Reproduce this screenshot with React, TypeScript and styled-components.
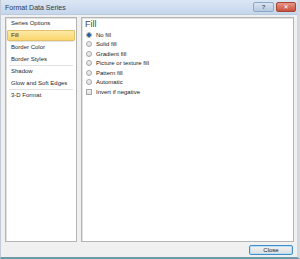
import styled, { createGlobalStyle } from "styled-components";

const Global = createGlobalStyle`
  html, body { margin: 0; padding: 0; }
  body {
    width: 300px;
    height: 259px;
    overflow: hidden;
    font-family: "Liberation Sans", "DejaVu Sans", sans-serif;
  }
`;

// Dialog window
const Window = styled.div`
  width: 300px;
  height: 259px;
  box-sizing: border-box;
  background: #f0f0f0;
  border-left: 1px solid #c3ccd6;
  border-right: 3px solid #d4d8dc;
  border-bottom: 2px solid #6b9aab;
  display: flex;
  flex-direction: column;
`;

const TitleBar = styled.div`
  height: 14px;
  flex: none;
  display: flex;
  align-items: center;
  padding-left: 4px;
  padding-right: 1px;
  background: linear-gradient(#dbe6f4, #c5d6ec);
  border-bottom: 1px solid #b9cbe0;
`;

const Title = styled.span`
  flex: 1;
  font-size: 7px;
  color: #2b3b50;
`;

const CaptionButton = styled.div<{ $red?: boolean }>`
  width: ${(p) => (p.$red ? 18 : 19)}px;
  height: 8px;
  margin-left: 2px;
  border: 1px solid ${(p) => (p.$red ? "#a8452f" : "#8ea7c4")};
  border-radius: 2px;
  background: ${(p) =>
    p.$red
      ? "linear-gradient(#e6968a, #c9503c)"
      : "linear-gradient(#d9e4f1, #b6c9e0)"};
  color: ${(p) => (p.$red ? "#fff" : "#4a5a70")};
  font-size: 6px;
  font-weight: bold;
  line-height: 8px;
  text-align: center;
`;

const Body = styled.div`
  flex: 1;
  display: flex;
  gap: 4px;
  padding: 2px 3px 0 4px;
  min-height: 0;
`;

const Panel = styled.div<{ $w?: number }>`
  ${(p) => (p.$w ? `width: ${p.$w}px; flex: none;` : "flex: 1;")}
  height: 225px;
  box-sizing: border-box;
  background: #fff;
  border: 1px solid #b4b4b4;
  box-shadow: inset 1px 1px 0 #e2e2e2;
`;

const List = styled.div`
  padding: 0 1px;
  display: flex;
  flex-direction: column;
`;

const ListItem = styled.div<{ $selected?: boolean }>`
  height: 11.5px;
  line-height: 9.5px;
  padding-left: 3px;
  font-size: 6px;
  color: #2a2a2a;
  box-sizing: border-box;
  border: 1px solid ${(p) => (p.$selected ? "#e3c06a" : "transparent")};
  border-radius: 1px;
  background: ${(p) =>
    p.$selected ? "linear-gradient(#fdeaa6, #fbd66c)" : "transparent"};
`;

const Divider = styled.div`
  height: 1px;
  background: #e2e2e2;
  margin: 0 2px;
`;

const Section = styled.div`
  padding: 1px 0 0 3px;
`;

const Heading = styled.div`
  font-size: 9px;
  color: #3b4a5e;
  height: 11px;
  line-height: 11px;
`;

const Option = styled.div`
  display: flex;
  align-items: center;
  gap: 4px;
  height: 9.5px;
  padding-left: 1px;
  font-size: 6px;
  color: #222;
`;

const Radio = styled.span<{ $on?: boolean }>`
  width: 6px;
  height: 6px;
  box-sizing: border-box;
  border-radius: 50%;
  border: 1px solid #a7a7a7;
  background: ${(p) =>
    p.$on
      ? "radial-gradient(circle, #1f5fa8 0 1.6px, #dfe6ee 2px)"
      : "linear-gradient(#f2f2f2, #dcdcdc)"};
`;

const Check = styled.span`
  width: 6px;
  height: 6px;
  box-sizing: border-box;
  border: 1px solid #a7a7a7;
  background: linear-gradient(#f4f4f4, #dedede);
`;

const Footer = styled.div`
  height: 15px;
  flex: none;
  display: flex;
  justify-content: flex-end;
  align-items: center;
  padding-right: 4px;
`;

const Button = styled.div`
  width: 44px;
  height: 10px;
  box-sizing: border-box;
  border: 1px solid #3c8fc8;
  border-radius: 2px;
  box-shadow: inset 0 0 0 1px #b8e0f8;
  background: linear-gradient(#f4f4f4, #dcdcdc);
  font-size: 6px;
  line-height: 8px;
  text-align: center;
  color: #222;
`;

const groups = [
  ["Series Options", "Fill"],
  ["Border Color", "Border Styles"],
  ["Shadow", "Glow and Soft Edges"],
  ["3-D Format"],
];

const options = [
  "No fill",
  "Solid fill",
  "Gradient fill",
  "Picture or texture fill",
  "Pattern fill",
  "Automatic",
];

const App = () => (
  <>
    <Global />
    <Window>
      <TitleBar>
        <Title>Format Data Series</Title>
        <CaptionButton>?</CaptionButton>
        <CaptionButton $red>✕</CaptionButton>
      </TitleBar>
      <Body>
        <Panel $w={72}>
          <List>
            {groups.map((g, gi) => (
              <div key={gi}>
                {gi > 0 && <Divider />}
                {g.map((item) => (
                  <ListItem key={item} $selected={item === "Fill"}>
                    {item}
                  </ListItem>
                ))}
              </div>
            ))}
          </List>
        </Panel>
        <Panel>
          <Section>
            <Heading>Fill</Heading>
            {options.map((o, i) => (
              <Option key={o}>
                <Radio $on={i === 0} />
                {o}
              </Option>
            ))}
            <Option>
              <Check />
              Invert if negative
            </Option>
          </Section>
        </Panel>
      </Body>
      <Footer>
        <Button>Close</Button>
      </Footer>
    </Window>
  </>
);

export default App;
